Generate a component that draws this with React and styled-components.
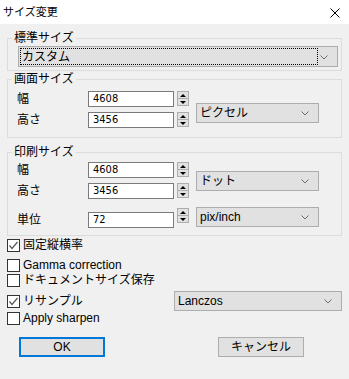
import React from "react";
import styled, { createGlobalStyle } from "styled-components";

const GlobalStyle = createGlobalStyle`
  html, body {
    margin: 0;
    padding: 0;
    background: #f0f0f0;
  }
  body {
    font-family: "Liberation Sans", "Noto Sans CJK JP", sans-serif;
    font-size: 12px;
    color: #000;
  }
`;

const Window = styled.div`
  width: 349px;
  height: 379px;
  background: #f0f0f0;
  overflow: hidden;
`;

const TitleBar = styled.div`
  height: 24px;
  background: #fff;
  display: flex;
  align-items: center;
  justify-content: space-between;
  padding: 0 9px 0 3px;
  box-sizing: border-box;
`;

const Title = styled.span`
  font-size: 11px;
  line-height: 14px;
  margin-top: -1px;
`;

const CloseIcon = styled.svg`
  width: 10px;
  height: 10px;
  margin-top: 2px;
`;

const Group = styled.fieldset`
  margin: ${(p) => p.$top}px 7px 0 7px;
  padding: 0;
  border: 1px solid #dcdcdc;
  min-width: 0;
`;

const Legend = styled.legend`
  margin-left: 4px;
  padding: 0 2px;
  font-size: 12px;
  line-height: 14px;
`;

const GroupBody = styled.div`
  padding: ${(p) => p.$pad};
`;

const Grid = styled.div`
  display: grid;
  grid-template-columns: 71px 86px 3px 12px 7px 123px;
  grid-auto-rows: ${(p) => p.$rows};
`;

const Label = styled.span`
  grid-column: 1;
  align-self: start;
  line-height: 16px;
`;

const NumInput = styled.div`
  grid-column: 2;
  height: 16px;
  border: 1px solid #7a7a7a;
  background: #fff;
  box-sizing: border-box;
  padding: 0 0 0 4px;
  display: flex;
  align-items: center;
  font-family: "Liberation Sans Narrow", "DejaVu Sans Condensed", "DejaVu Sans", sans-serif;
  font-stretch: condensed;
  font-size: 11px;
  line-height: 14px;
`;

const Spinner = styled.div`
  grid-column: 4;
  height: 15px;
  display: flex;
  flex-direction: column;
  margin-top: ${(p) => p.$top || 0}px;
`;

const SpinHalf = styled.div`
  flex: 1;
  background: #e1e1e1;
  border: 1px solid #adadad;
  display: flex;
  align-items: center;
  justify-content: center;
  & + & {
    border-top: none;
  }
`;

const Tri = styled.span`
  width: 0;
  height: 0;
  border-left: 3px solid transparent;
  border-right: 3px solid transparent;
  ${(p) =>
    p.$down
      ? "border-top: 3px solid #000;"
      : "border-bottom: 3px solid #000;"}
`;

const Combo = styled.div`
  position: relative;
  width: ${(p) => p.$w}px;
  height: ${(p) => p.$h || 20}px;
  background: #e1e1e1;
  border: 1px solid #adadad;
  box-sizing: border-box;
  display: flex;
  align-items: center;
  padding-left: 3px;
  line-height: 14px;
  ${(p) => (p.$col ? `grid-column: ${p.$col};` : "")}
  ${(p) => (p.$row ? `grid-row: ${p.$row};` : "")}
  ${(p) => (p.$mt !== undefined ? `margin-top: ${p.$mt}px; align-self: start;` : "")}
`;

const Focus = styled.div`
  flex: 1;
  align-self: stretch;
  margin: 1px 19px 1px -2px;
  padding-left: 1px;
  border: 1px dotted #000;
  display: flex;
  align-items: center;
`;

const Chevron = styled.svg`
  position: absolute;
  right: 9px;
  top: 50%;
  margin-top: -2px;
  width: 8px;
  height: 5px;
`;

const ChecksArea = styled.div`
  padding: 0 0 0 7px;
`;

const CheckRow = styled.div`
  display: flex;
  align-items: center;
  justify-content: space-between;
  height: ${(p) => p.$h}px;
  margin-top: ${(p) => p.$mt}px;
  padding-right: 7px;
`;

const CheckLabel = styled.label`
  display: flex;
  align-items: center;
  gap: 3px;
  line-height: 13px;
`;

const Box = styled.span`
  width: 13px;
  height: 13px;
  box-sizing: border-box;
  border: 1px solid #333;
  background: #fff;
  display: flex;
  align-items: center;
  justify-content: center;
`;

const Buttons = styled.div`
  display: flex;
  gap: 113px;
  padding: 0 0 0 19px;
  margin-top: 12px;
`;

const Button = styled.div`
  width: 86px;
  height: 20px;
  box-sizing: border-box;
  background: #e1e1e1;
  border: ${(p) => (p.$primary ? "2px solid #0078d7" : "1px solid #adadad")};
  display: flex;
  align-items: center;
  justify-content: center;
  line-height: 14px;
`;

const ChevronIcon = () => (
  <Chevron viewBox="0 0 8 5">
    <polyline points="0.5,0.5 4,4 7.5,0.5" fill="none" stroke="#6d6d6d" strokeWidth="1" />
  </Chevron>
);

const Select = ({ children, focused, ...rest }) => (
  <Combo {...rest}>
    {focused ? <Focus>{children}</Focus> : children}
    <ChevronIcon />
  </Combo>
);

const Spin = ({ top }) => (
  <Spinner $top={top}>
    <SpinHalf>
      <Tri />
    </SpinHalf>
    <SpinHalf>
      <Tri $down />
    </SpinHalf>
  </Spinner>
);

const Check = ({ checked, children }) => (
  <CheckLabel>
    <Box>
      {checked && (
        <svg width="11" height="11" viewBox="0 0 11 11">
          <polyline points="1.5,5.5 4,8.5 9.5,2" fill="none" stroke="#555" strokeWidth="1.2" />
        </svg>
      )}
    </Box>
    {children}
  </CheckLabel>
);

const NumRow = ({ label, value }) => (
  <>
    <Label>{label}</Label>
    <NumInput>{value}</NumInput>
    <Spin />
  </>
);

export default function App() {
  return (
    <>
      <GlobalStyle />
      <Window>
        <TitleBar>
          <Title>サイズ変更</Title>
          <CloseIcon viewBox="0 0 10 10">
            <path d="M0.5 0.5 L9.5 9.5 M9.5 0.5 L0.5 9.5" stroke="#000" strokeWidth="1" />
          </CloseIcon>
        </TitleBar>

        <Group $top={7}>
          <Legend>標準サイズ</Legend>
          <GroupBody $pad="1px 3px 3px 10px">
            <Select $w={320} $h={21} focused>
              カスタム
            </Select>
          </GroupBody>
        </Group>

        <Group $top={1}>
          <Legend>画面サイズ</Legend>
          <GroupBody $pad="5px 0 4px 9px">
            <Grid $rows="21px">
              <NumRow label="幅" value="4608" />
              <Select $w={123} $col={6} $row="1 / 3" $mt={12}>
                ピクセル
              </Select>
              <NumRow label="高さ" value="3456" />
            </Grid>
          </GroupBody>
        </Group>

        <Group $top={7}>
          <Legend>印刷サイズ</Legend>
          <GroupBody $pad="3px 0 6px 9px">
            <Grid $rows="21px 29px 17px">
              <NumRow label="幅" value="4608" />
              <Select $w={123} $col={6} $row="1 / 3" $mt={9}>
                ドット
              </Select>
              <NumRow label="高さ" value="3456" />
              <Label>単位</Label>
              <NumInput>72</NumInput>
              <Spin top={-4} />
              <Select $w={123} $col={6} $mt={-5}>
                pix/inch
              </Select>
            </Grid>
          </GroupBody>
        </Group>

        <ChecksArea>
          <CheckRow $h={13} $mt={3}>
            <Check checked>固定縦横率</Check>
          </CheckRow>
          <CheckRow $h={13} $mt={7}>
            <Check>Gamma correction</Check>
          </CheckRow>
          <CheckRow $h={13} $mt={2}>
            <Check>ドキュメントサイズ保存</Check>
          </CheckRow>
          <CheckRow $h={20} $mt={4}>
            <Check checked>リサンプル</Check>
            <Select $w={168}>Lanczos</Select>
          </CheckRow>
          <CheckRow $h={13} $mt={1}>
            <Check>Apply sharpen</Check>
          </CheckRow>
        </ChecksArea>

        <Buttons>
          <Button $primary>OK</Button>
          <Button>キャンセル</Button>
        </Buttons>
      </Window>
    </>
  );
}
